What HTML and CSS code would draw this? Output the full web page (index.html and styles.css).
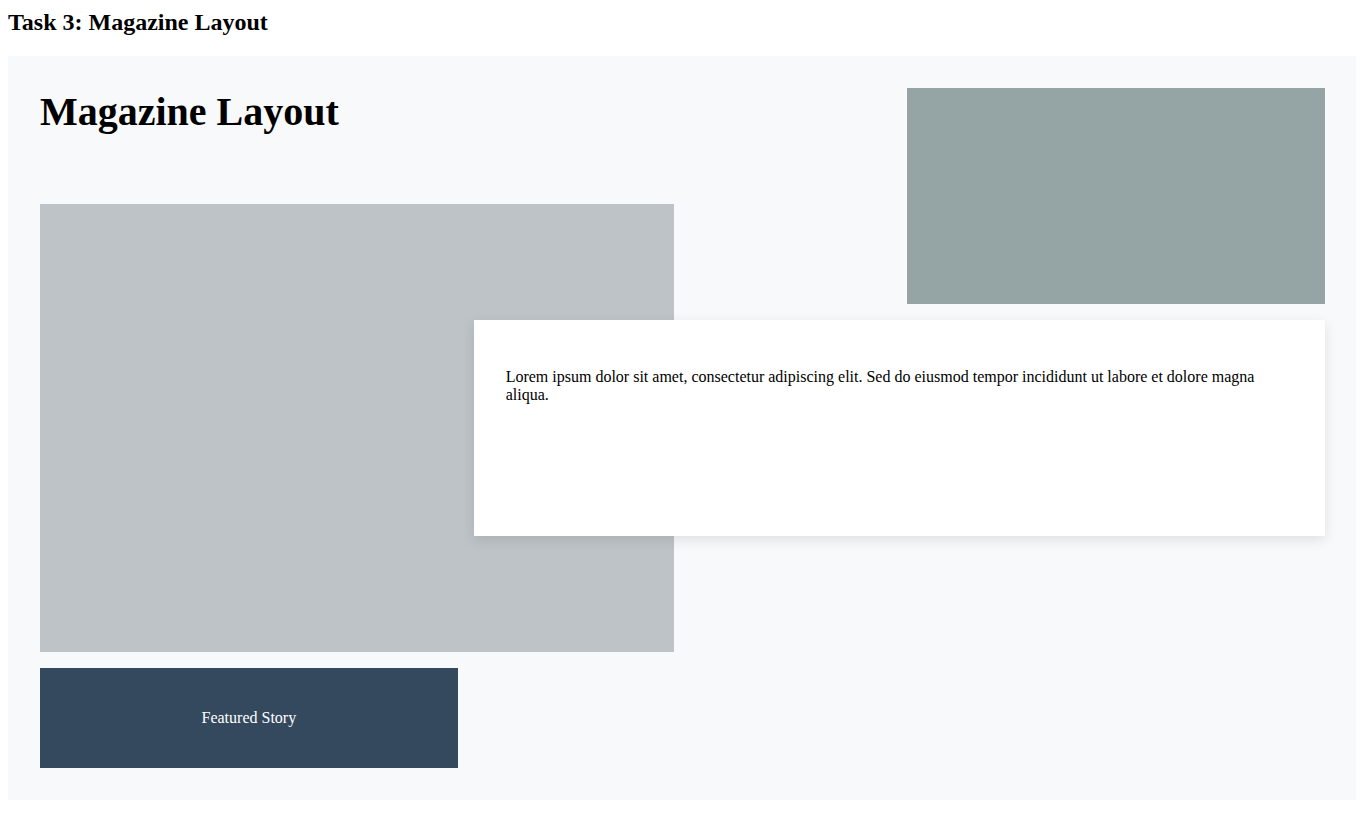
FILE: index.html
```html
<!DOCTYPE html>
<html>
<head>
<meta charset="utf-8">
<link rel="stylesheet" href="styles.css">
</head>
<body>
<h2 class="task-title">Task 3: Magazine Layout</h2>
<div class="magazine">
  <h1 class="mag-title">Magazine Layout</h1>
  <div class="mag-aside"></div>
  <div class="mag-hero"></div>
  <div class="mag-card"><p>Lorem ipsum dolor sit amet, consectetur adipiscing elit. Sed do eiusmod tempor incididunt ut labore et dolore magna aliqua.</p></div>
  <div class="mag-feature">Featured Story</div>
</div>
</body>
</html>
```

FILE: styles.css
```css
body {
  margin: 8px;
  font-family: "Liberation Serif", "Times New Roman", serif;
  background: #fff;
  color: #000;
}
.task-title {
  margin: 0 0 20px 0;
  font-size: 24px;
  line-height: 28px;
}
.magazine {
  background: #f8f9fa;
  padding: 32px;
  margin-right: -1px;
  display: grid;
  grid-template-columns: repeat(12, 1fr);
  grid-template-rows: repeat(6, 100px);
  gap: 16px;
}
.mag-title {
  grid-column: 1 / 7;
  grid-row: 1;
  margin: 0;
  font-size: 40px;
  line-height: 48px;
}
.mag-aside {
  grid-column: 9 / 13;
  grid-row: 1 / 3;
  background: #95a5a6;
}
.mag-hero {
  grid-column: 1 / 7;
  grid-row: 2 / 6;
  background: #bdc3c7;
}
.mag-card {
  grid-column: 5 / 13;
  grid-row: 3 / 5;
  background: #fff;
  padding: 32px;
  box-shadow: 0 4px 12px rgba(0, 0, 0, 0.1);
  z-index: 1;
  font-size: 16px;
}
.mag-card p {
  margin: 16px 0;
}
.mag-feature {
  grid-column: 1 / 5;
  grid-row: 6;
  background: #34495e;
  color: #fff;
  display: flex;
  align-items: center;
  justify-content: center;
  font-size: 16px;
}
```
